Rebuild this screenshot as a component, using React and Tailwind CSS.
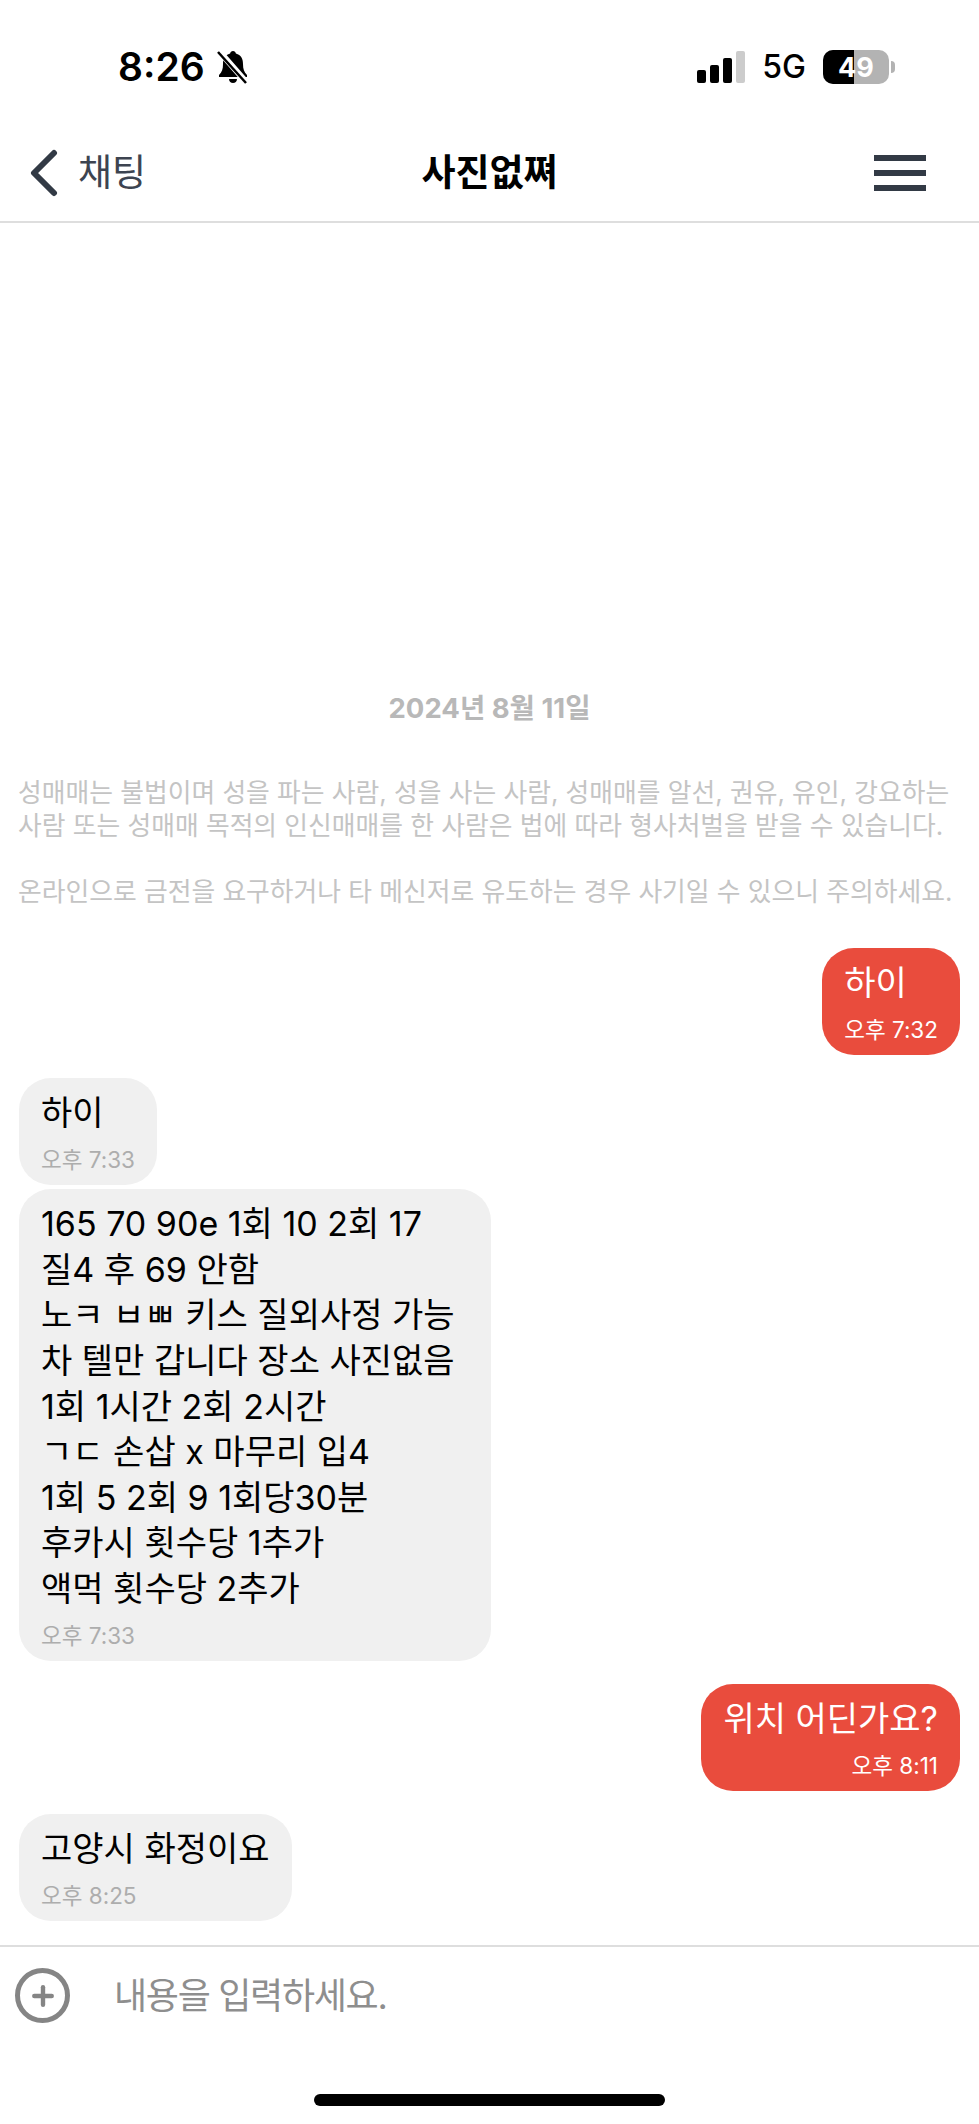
import React from "react";
import { Plus } from "lucide-react";

const fontStack = "font-['Inter','Noto_Sans_CJK_KR',sans-serif]";

const StatusBar = () => (
    <div className="h-[111px] shrink-0 flex items-start justify-between pt-[44px] pl-[118px] pr-[84px]">
        <div className="flex items-center gap-[2px]">
            <span className="text-[39px] leading-[46px] font-semibold text-black">8:26</span>
            <svg width="34" height="36" viewBox="0 0 34 36" className="ml-[9px]">
                <path d="M17 2c1.600 0 2.600 1 2.900 2.600C25 6 27 10 27 15c0 5 1 8 4 11v2H3v-2c3-3 4-6 4-11 0-5 2-9 7.100-10.400C14.400 3 15.400 2 17 2z" fill="#000" />
                <path d="M13 30h8c0 2.400-1.800 4-4 4s-4-1.600-4-4z" fill="#000" />
                <path d="M3 2l28 32" stroke="#fff" strokeWidth="6" />
                <path d="M2 3l28 31" stroke="#000" strokeWidth="2.500" />
            </svg>
        </div>
        <div className="flex items-center pt-[5px]">
            <div className="flex items-end gap-[4px] h-[32px] mb-[1px]">
                <div className="w-[9px] h-[13px] rounded-[2px] bg-black" />
                <div className="w-[9px] h-[18px] rounded-[2px] bg-black" />
                <div className="w-[9px] h-[25px] rounded-[2px] bg-black" />
                <div className="w-[9px] h-[32px] rounded-[2px] bg-[#cccccc]" />
            </div>
            <span className="ml-[17px] text-[32px] leading-[36px] font-medium text-black">5G</span>
            <div className="ml-[17px] relative w-[66px] h-[34px] rounded-[10px] overflow-hidden bg-[#b3b3b3] flex">
                <div className="w-[31px] bg-black" />
                <div className="absolute inset-0 flex items-center justify-center text-[27px] leading-none font-bold text-white">49</div>
            </div>
            <div className="ml-[2px] w-[4px] h-[12px] rounded-r-full bg-[#b3b3b3]" />
        </div>
    </div>
);

const NavBar = () => (
    <div className="h-[112px] shrink-0 relative flex items-center justify-between border-b-2 border-[#dedede] pt-[13px] pl-[28px] pr-[53px]">
        <div className="flex items-center gap-[18px]">
            <svg width="32" height="48" viewBox="0 0 32 48" fill="none">
                <path d="M26 4L6 24l20 20" stroke="#323a45" strokeWidth="6" strokeLinecap="round" strokeLinejoin="round" />
            </svg>
            <span className="text-[37px] leading-[44px] text-[#3d4450]">채팅</span>
        </div>
        <div className="absolute left-0 right-0 text-center text-[37px] leading-[44px] font-bold text-black">사진없쪄</div>
        <div className="flex flex-col gap-[9px] w-[52px]">
            <div className="h-[6px] bg-[#323a45]" />
            <div className="h-[6px] bg-[#323a45]" />
            <div className="h-[6px] bg-[#323a45]" />
        </div>
    </div>
);

const Bubble = ({ mine, time, lines, width = "w-fit" }) => (
    <div className={mine ? "flex justify-end" : "flex justify-start"}>
        <div className={`${width} ${mine
            ? "flex flex-col rounded-[32px] bg-[#e94c3d] text-white px-[22px] pt-[12px] pb-[12.400px]"
            : "flex flex-col rounded-[32px] bg-[#f0f0f0] text-black px-[22px] pt-[12px] pb-[12.400px]"}`}>
            {lines.map((line, index) => (
                <div key={index} className="text-[34px] leading-[45.600px] whitespace-nowrap">{line}</div>
            ))}
            <div className={mine
                ? "self-end text-[22.500px] leading-[26px] mt-[11px] whitespace-nowrap text-white"
                : "self-start text-[22.500px] leading-[26px] mt-[11px] whitespace-nowrap text-[#adadad]"}>{time}</div>
        </div>
    </div>
);

const App = () => {
    return (
        <div className={`${fontStack} w-[979px] h-[2124px] bg-white flex flex-col overflow-hidden`}>
            <StatusBar />
            <NavBar />
            <div className="flex-1 flex flex-col justify-end px-[19px] pb-[24px]">
                <div className="text-center text-[27.500px] leading-[32px] font-bold text-[#b8b8b8] mb-[52px]">2024년 8월 11일</div>
                <div className="text-[25.800px] leading-[33px] text-[#c4c4c4] whitespace-nowrap -mx-[1px]">
                    <div>성매매는 불법이며 성을 파는 사람, 성을 사는 사람, 성매매를 알선, 권유, 유인, 강요하는</div>
                    <div>사람 또는 성매매 목적의 인신매매를 한 사람은 법에 따라 형사처벌을 받을 수 있습니다.</div>
                    <div className="mt-[33px]">온라인으로 금전을 요구하거나 타 메신저로 유도하는 경우 사기일 수 있으니 주의하세요.</div>
                </div>
                <div className="mt-[40px] flex flex-col">
                    <Bubble mine lines={["하이"]} time="오후 7:32" />
                    <div className="h-[23px]" />
                    <Bubble lines={["하이"]} time="오후 7:33" />
                    <div className="h-[4px]" />
                    <Bubble
                        width="w-[472px]"
                        lines={[
                            "165 70 90e 1회 10 2회 17",
                            "질4 후 69 안함",
                            "노ㅋ ㅂㅃ 키스 질외사정 가능",
                            "차 텔만 갑니다 장소 사진없음",
                            "1회 1시간 2회 2시간",
                            "ㄱㄷ 손삽 x 마무리 입4",
                            "1회 5 2회 9 1회당30분",
                            "후카시 횟수당 1추가",
                            "액먹 횟수당 2추가",
                        ]}
                        time="오후 7:33"
                    />
                    <div className="h-[23px]" />
                    <Bubble mine lines={["위치 어딘가요?"]} time="오후 8:11" />
                    <div className="h-[23px]" />
                    <Bubble lines={["고양시 화정이요"]} time="오후 8:25" />
                </div>
            </div>
            <div className="h-[179px] shrink-0 border-t-2 border-[#dedede] flex flex-col">
                <div className="flex items-center pl-[15px] pt-[21px]">
                    <div className="w-[55px] h-[55px] rounded-full border-[5px] border-[#858585] flex items-center justify-center">
                        <Plus size={30} strokeWidth={3.500} className="text-[#858585]" />
                    </div>
                    <span className="ml-[44px] text-[36px] leading-[48px] tracking-[-1.300px] text-[#8e8e8e]">내용을 입력하세요.</span>
                </div>
                <div className="mt-auto mb-[18px] ml-[314px] w-[351px] h-[12px] rounded-full bg-black" />
            </div>
        </div>
    );
};

export default App;
